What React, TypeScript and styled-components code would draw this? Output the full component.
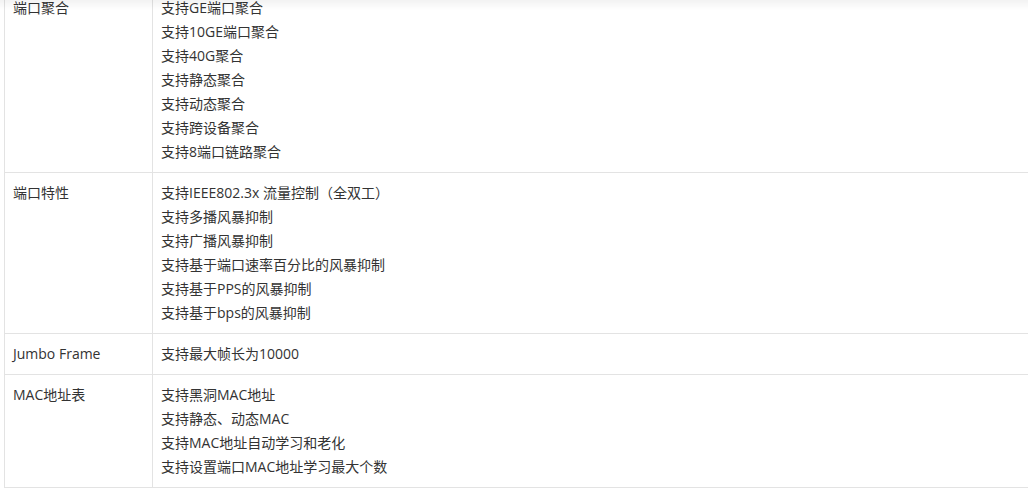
import React from "react";
import styled, { createGlobalStyle } from "styled-components";

const Global = createGlobalStyle`
  html, body { margin: 0; padding: 0; background: #fff; overflow: hidden; }
  body { font-family: "Open Sans", "Noto Sans CJK SC", sans-serif; color: #333; font-size: 14px; }
`;

const Page = styled.div`
  padding-left: 4px;
`;

const TopShade = styled.div`
  position: fixed;
  top: 0;
  left: 0;
  right: 0;
  height: 10px;
  background: linear-gradient(rgba(0, 0, 0, 0.05), rgba(0, 0, 0, 0));
  pointer-events: none;
`;

const Table = styled.table`
  margin-top: -13px;
  border-collapse: collapse;
  width: 100%;
  table-layout: fixed;
`;

const Cell = styled.td<{ $first?: boolean }>`
  border: 1px solid #e3e3e3;
  border-right: ${(p) => (p.$first ? "1px solid #e3e3e3" : "none")};
  padding: 8px;
  vertical-align: top;
  width: ${(p) => (p.$first ? "131px" : "auto")};
  font-size: 14px;
  line-height: 24px;
  color: #333;
`;

const Line = styled.div`
  white-space: nowrap;
`;

const rows: { name: string; items: string[] }[] = [
  {
    name: "端口聚合",
    items: [
      "支持GE端口聚合",
      "支持10GE端口聚合",
      "支持40G聚合",
      "支持静态聚合",
      "支持动态聚合",
      "支持跨设备聚合",
      "支持8端口链路聚合",
    ],
  },
  {
    name: "端口特性",
    items: [
      "支持IEEE802.3x 流量控制（全双工）",
      "支持多播风暴抑制",
      "支持广播风暴抑制",
      "支持基于端口速率百分比的风暴抑制",
      "支持基于PPS的风暴抑制",
      "支持基于bps的风暴抑制",
    ],
  },
  { name: "Jumbo Frame", items: ["支持最大帧长为10000"] },
  {
    name: "MAC地址表",
    items: [
      "支持黑洞MAC地址",
      "支持静态、动态MAC",
      "支持MAC地址自动学习和老化",
      "支持设置端口MAC地址学习最大个数",
    ],
  },
];

export default function App() {
  return (
    <Page>
      <Global />
      <Table>
        <tbody>
          {rows.map((r) => (
            <tr key={r.name}>
              <Cell $first>{r.name}</Cell>
              <Cell>
                {r.items.map((it) => (
                  <Line key={it}>{it}</Line>
                ))}
              </Cell>
            </tr>
          ))}
        </tbody>
      </Table>
      <TopShade />
    </Page>
  );
}
